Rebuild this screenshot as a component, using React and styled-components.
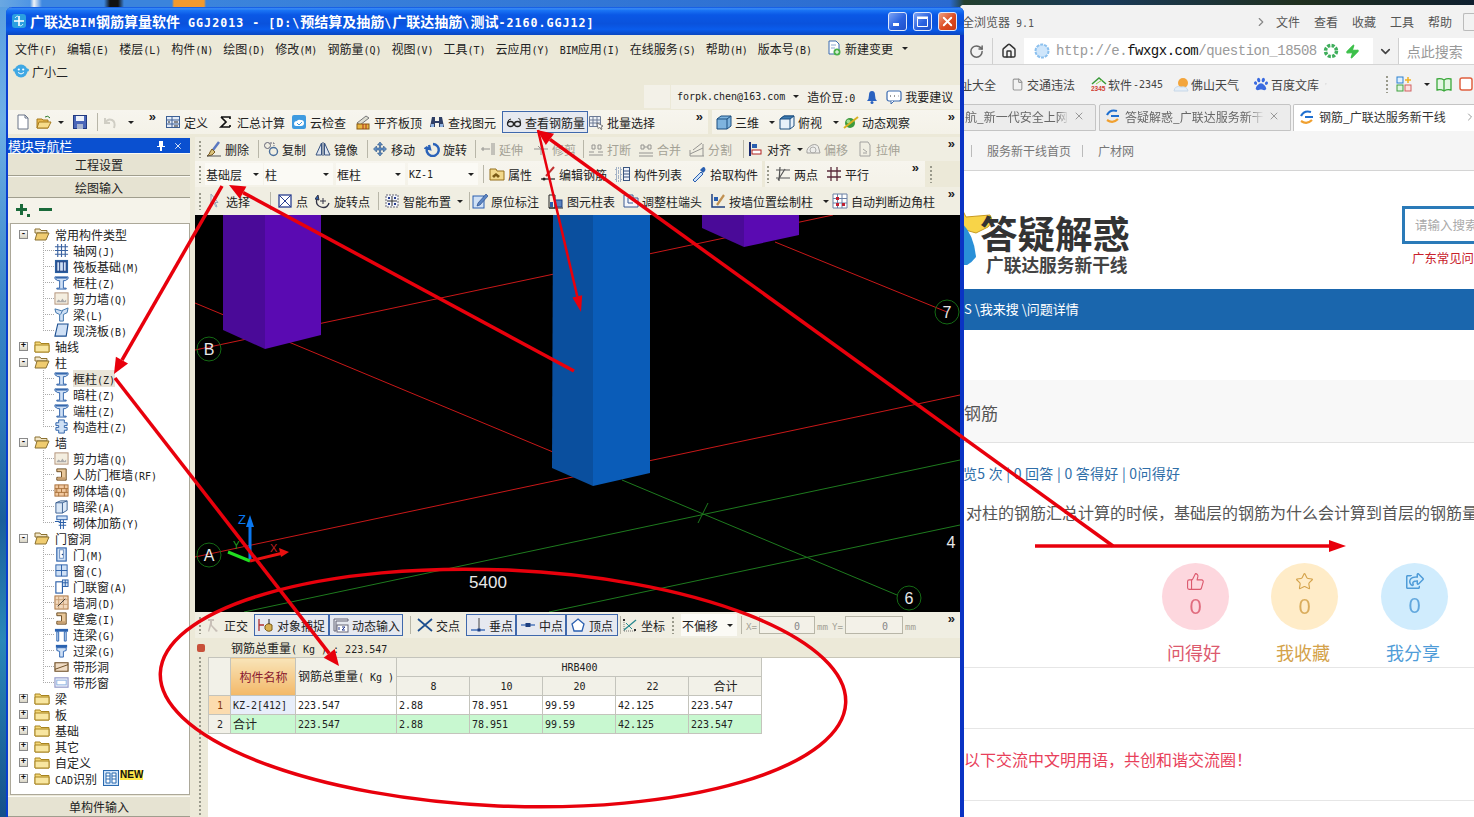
import React from "react";
import styled, { createGlobalStyle } from "styled-components";
import { RotateCw, House, ChevronDown, ChevronRight, ChevronsRight, X, Zap, File, ThumbsUp, Star } from "lucide-react";
import { FaPaw, FaRegShareSquare } from "react-icons/fa";

const Global = createGlobalStyle`
  html, body { margin: 0; padding: 0; background: #2a6fb8; }
  body { font-family: "Noto Sans CJK SC", "Liberation Sans", sans-serif; font-size: 12px; color: #222; }
`;

// latin runs in the old app are half-width, like SimSun
const Half = styled.span`
  font-family: "DejaVu Sans Mono", monospace;
  font-size: 0.8333em;
  white-space: pre;
`;
const Txt = ({ children }) =>
  String(children)
    .split(/([\x20-\x7e]+)/)
    .map((part, i) => (/^[\x20-\x7e]+$/.test(part) ? <Half key={i}>{part}</Half> : part));

const paths = {
  new: <><path d="M3 1h7l3 3v11H3z" fill="#fff" stroke="#6a7488" /><path d="M10 1v3h3" fill="none" stroke="#6a7488" /></>,
  open: <><path d="M1 5h5l1 1h5v8H1z" fill="#e9b94e" stroke="#a67a1c" /><path d="M3 8h12l-3 6H1z" fill="#f7dc8a" stroke="#a67a1c" /><path d="M9 3q3-2 5 1" fill="none" stroke="#2a7a2a" /></>,
  save: <><rect x="1.5" y="1.5" width="13" height="13" fill="#4a66b8" stroke="#223a80" /><rect x="4" y="2" width="8" height="5" fill="#eef2fa" /><rect x="5" y="10" width="6" height="5" fill="#a8b4d0" /></>,
  undo: <path d="M3 4v5h5M3 9q3-5 7-3t2 8" fill="none" stroke="#c4c2b8" strokeWidth="2" />,
  table: <><rect x="1.5" y="2.5" width="13" height="11" fill="#e4ecf8" stroke="#3c5f94" /><path d="M1.5 6h13M1.5 10h13M7 2.5v11" stroke="#3c5f94" /><path d="M3 8h2M9 8h4M9 12h4" stroke="#222" /></>,
  sigma: <path d="M3 3h9v2M12 13H3l5-5-5-5M12 13v-2" fill="none" stroke="#111" strokeWidth="1.7" />,
  cloud: <><rect x="1" y="1" width="14" height="14" rx="2" fill="#3f9be0" /><path d="M3 10q0-3 3-3 1-2 4-1 3 0 3 3t-3 3H5q-2 0-2-2z" fill="#fff" /><path d="M6 9l2 2 3-3" fill="none" stroke="#3f9be0" /></>,
  level: <><path d="M2 9l9-7 3 2-9 7z" fill="#dcdcd0" stroke="#777" /><rect x="2" y="10" width="12" height="5" fill="#e8b640" stroke="#8a5a10" /><path d="M8 10v5M11 10v5" stroke="#a32" /></>,
  bino: <><path d="M3 3h3v4h4V3h3l2 10h-5V9H6v4H1z" fill="#2f3f66" /><rect x="2" y="10" width="3" height="3" fill="#8fb2e0" /><rect x="11" y="10" width="3" height="3" fill="#8fb2e0" /></>,
  glasses: <><ellipse cx="4.5" cy="10" rx="3" ry="2.5" fill="none" stroke="#222" strokeWidth="1.3" /><ellipse cx="11.5" cy="10" rx="3" ry="2.5" fill="none" stroke="#222" strokeWidth="1.3" /><path d="M1.5 9Q2 5 5 5M14.5 9q0-4-2-5M7.5 10h1" fill="none" stroke="#222" /></>,
  batch: <><path d="M1.5 2.5h11v10h-11zM1.5 6h11M1.5 9h11M5 2.5v10M9 2.5v10" fill="#eef1f6" stroke="#6c7a94" /><path d="M9 9l6 3-2 1 1 2-1 .5-1-2-2 1z" fill="#fff" stroke="#555" strokeWidth=".7" /></>,
  cube: <><path d="M1 5l4-3h10v10l-4 3H1z" fill="#7fb4de" stroke="#1d4f80" /><path d="M1 5h10v10M11 5l4-3" fill="none" stroke="#1d4f80" /></>,
  cubeTop: <><path d="M1 5l4-3h10v10l-4 3H1z" fill="#e8f1fa" stroke="#1d4f80" /><path d="M1 5l4-3h10l-4 3z" fill="#3d7ab0" stroke="#1d4f80" /><path d="M11 5v10" stroke="#1d4f80" /></>,
  orbit: <><circle cx="7" cy="9" r="5" fill="#3d9a3d" /><circle cx="5.5" cy="7.5" r="2" fill="#9fdc8f" /><path d="M1 14L15 3" stroke="#d8b020" strokeWidth="2" /></>,
  broom: <><path d="M13 1L7 9" stroke="#5a78c0" strokeWidth="2.5" /><path d="M6 8l3 3-3 3-5 1q3-2 3-4z" fill="#d9c27a" stroke="#7a5a20" /><path d="M1 15h14" stroke="#555" /></>,
  copy: <><circle cx="4.5" cy="4.5" r="3" fill="none" stroke="#667" /><circle cx="10.5" cy="10.5" r="4" fill="none" stroke="#4a6f9c" strokeWidth="1.4" /><path d="M7 2h4v3" fill="none" stroke="#667" strokeDasharray="2 1" /></>,
  mirror: <><path d="M6.5 2v12H1zM9.5 2v12H15z" fill="#dfe6f0" stroke="#3a5580" /><path d="M8 1v14" stroke="#3a5580" /></>,
  move: <path d="M8 1l2.5 3h-2v3h3V5l3 3-3 3V9h-3v3h2L8 15l-2.5-3h2V9h-3v2l-3-3 3-3v2h3V4h-2z" fill="#5f8cc0" stroke="#2d5688" strokeWidth=".6" />,
  rotate: <path d="M4 3l1 4-4-1 1.5-1A6 6 0 1 0 8 2" transform="translate(1 1)" fill="none" stroke="#2a62b8" strokeWidth="2.4" />,
  extend: <path d="M1 8h9M12 2v12M14 2v12M3 6v4" stroke="#777" fill="none" />,
  trim: <path d="M1 8h14M8 2v12M5 5l6 6" stroke="#777" fill="none" />,
  brk: <path d="M1 11h5M10 11h5M1 14h14M4 4h3v4H4zM10 4h3v4h-3z" stroke="#777" fill="none" />,
  merge: <path d="M1 12h14M1 15h14M3 4h3v4H3zM10 4h3v4h-3zM6 6h4" stroke="#777" fill="none" />,
  split: <path d="M1 13L14 7M1 15h14M1 9v6M14 3v12M4 9l9-7" stroke="#777" fill="none" />,
  align: <><path d="M2 1v14" stroke="#1a2a70" strokeWidth="2" /><rect x="4" y="3" width="5" height="4" fill="#2a5fb0" /><rect x="4" y="9" width="9" height="4" fill="#fff" stroke="#b02020" /></>,
  offset: <><path d="M2 12q-1-5 5-8 6-2 7 4l1 4z" fill="#eee" stroke="#888" /><circle cx="8" cy="9" r="3" fill="none" stroke="#999" /></>,
  stretch: <path d="M3 1h8l2 3v11H3zM6 8l4 3M6 12h4" fill="none" stroke="#888" />,
  attr: <><path d="M1 3h6l1 2h7v9H1z" fill="#f2d88a" stroke="#96701c" /><path d="M3 10l4-3 4 3-2 2-2-2-2 2z" fill="#7a5a14" /></>,
  editbar: <><path d="M14 1L6 10" stroke="#c03030" strokeWidth="2" /><path d="M1 13h14" stroke="#222" strokeWidth="1.2" /><circle cx="4" cy="13" r="1.5" fill="#222" /></>,
  list: <><path d="M1 2h5v3H1zM1 7h5v3H1zM1 12h5v3H1z" fill="none" stroke="#5070a0" strokeDasharray="1 1" /><rect x="8.5" y="1.5" width="6" height="13" fill="#eef2fa" stroke="#3a5580" /><path d="M8.5 5h6M8.5 8h6M8.5 11h6" stroke="#3a5580" /></>,
  dropper: <><path d="M2 14l8-8 2 2-8 8z" fill="#cfe3f8" stroke="#2a5fb0" /><path d="M9 4l2-2q2-2 3 0t0 3l-2 2z" fill="#2a5fb0" /></>,
  twopts: <path d="M1 4h14M1 12h14M5 1l-1 14M10 3L3 14" fill="none" stroke="#555" strokeWidth="1.2" />,
  parallel: <path d="M1 5h14M1 11h14M5 1v14M11 1v14" stroke="#5a2a3a" strokeWidth="1.3" />,
  cursor: <path d="M4 1v11l3-2 2 4 1-.5-2-4h3z" fill="#eee" stroke="#9ab" />,
  pointx: <><rect x="2" y="2" width="12" height="12" fill="#fff" stroke="#2a3f90" strokeWidth="1.3" /><path d="M2 2l12 12M14 2L2 14" stroke="#2a3f90" /></>,
  rotpt: <><path d="M2 6q-2 6 4 8t8-4" fill="none" stroke="#334" strokeWidth="1.3" /><path d="M3 2l1 5-4-1zM8 5v6M5 8h6" fill="#2a5fb0" stroke="#334" /></>,
  smart: <><rect x="2" y="2" width="12" height="12" fill="#f4f6fa" stroke="#667" strokeDasharray="2 1" /><path d="M8 3v10M3 8h10" stroke="#333" /><path d="M4 4h2v2H4zM10 10h2v2h-2zM10 4h2v2h-2zM4 10h2v2H4z" fill="#2a3f90" /></>,
  mark: <><rect x="1" y="3" width="11" height="12" fill="#cfe0f5" stroke="#2a5fb0" /><path d="M14 1L6 10l-1 3 3-1 8-9z" fill="#5c86c4" stroke="#1d3f80" strokeWidth=".6" /></>,
  coltab: <><path d="M1 2h6v13H1zM1 15h14" fill="none" stroke="#222" /><rect x="7" y="7" width="7" height="7" fill="#5a83c0" stroke="#1d3f80" /><rect x="2" y="9" width="3" height="5" fill="#2a5fb0" /></>,
  adjust: <><path d="M1 2h9v3h5v9H1z" fill="#f4f6fa" stroke="#3a5a94" /><path d="M5 5v5h5" fill="none" stroke="#3a5a94" /></>,
  wallpos: <><path d="M2 1v13h13" fill="none" stroke="#1d3f80" strokeWidth="1.5" /><rect x="4" y="4" width="4" height="4" fill="#2a5fb0" /><path d="M14 2L7 12" stroke="#c09050" strokeWidth="2.2" /></>,
  corner: <><path d="M1 1h14v14H1zM1 5.5h14M1 10h14M5.5 1v14M10 1v14" fill="#fff" stroke="#6a80a4" /><path d="M4 4h3v3H4zM4 10h3v3H4zM10 10h3v3h-3z" fill="#c02030" /></>,
  ortho: <path d="M3 2h6v2H7v4l6 6-2 1-5-6-2 6-1-1 2-8V4H3z" fill="#c8c0b8" />,
  snap: <><path d="M1 2v12M1 8h5" stroke="#b03030" strokeWidth="1.3" /><path d="M7 9q3-4 7-1v5q-4 3-7-1z" fill="#d8b050" stroke="#7a5a14" /><path d="M11 2v5" stroke="#222" /></>,
  dyn: <><path d="M1 2h14v2H3v10H1z" fill="none" stroke="#667" /><rect x="4" y="8" width="11" height="7" fill="#fff" stroke="#667" /><path d="M6 10v3M9 10h3l-3 3h3" stroke="#2a3f90" fill="none" /></>,
  cross: <path d="M1 2l14 12M15 2L1 14" stroke="#1d4f90" strokeWidth="1.7" />,
  perp: <><path d="M1 13h14" stroke="#2a5fb0" strokeWidth="1.3" /><path d="M9 1v12" stroke="#444" /><rect x="7.5" y="11.5" width="3" height="3" fill="#1d3f80" /></>,
  mid: <><path d="M1 8h14" stroke="#2a5fb0" strokeWidth="1.2" /><rect x="5.5" y="6" width="5" height="4" fill="#1d3f80" /></>,
  vertex: <path d="M8 2l6 5-2 7H4L2 7z" fill="#fff" stroke="#2a5fb0" strokeWidth="1.3" />,
  coords: <><path d="M2 14V4M2 14h12" stroke="#777" strokeDasharray="1 1" /><path d="M2 13L14 3" stroke="#2a8a90" strokeWidth="1.3" /><path d="M4 6l6 6" stroke="#2a8a90" /><rect x="1" y="2" width="2" height="2" fill="#333" /><rect x="12" y="12" width="2" height="2" fill="#333" /></>,
  grid: <path d="M1 4h14M1 8h14M1 12h14M4 1v14M8 1v14M12 1v14" stroke="#3a62a0" strokeWidth="1.2" />,
  raft: <><rect x="1" y="1" width="14" height="14" fill="#2a5fa0" /><rect x="3" y="3" width="10" height="10" fill="#cfe0f5" stroke="#1d3f80" /><path d="M6 3v10M10 3v10" stroke="#1d3f80" /></>,
  col: <><path d="M1 2h14v2l-3 2h-2v8h3v1H3v-1h3V6H4L1 4z" fill="#cfe0f5" stroke="#2a5fa8" /><path d="M2 3h12" stroke="#2a5fa8" strokeWidth="1.5" /></>,
  shear: <><rect x="1" y="2" width="14" height="12" fill="#f4eee0" stroke="#b09078" /><path d="M3 11l2-2 2 2 2-3 2 3 2-2v3H3z" fill="#aaa" /></>,
  beam: <><path d="M1 2l7 2 7-3-1 5-4 2v7H6V8L2 6z" fill="#cfe0f5" stroke="#3a70a8" /><path d="M9 4l-2 4" stroke="#3a70a8" /></>,
  slab: <path d="M4 1h11l-2 13H1z" fill="#cfe0f5" stroke="#1d4f90" strokeWidth="1.2" />,
  conscol: <path d="M5 1h6v3h3v3h-3v2h3v3h-3v3H5v-3H2V9h3V7H2V4h3z" fill="#cfe0f5" stroke="#2a5fa8" />,
  fdoor: <><path d="M3 2h10v12H3v-3h5V5H3z" fill="#e8c79a" stroke="#6a4a20" /><rect x="4" y="11" width="8" height="2" fill="#c8a070" /></>,
  brick: <><rect x="1" y="2" width="14" height="12" fill="#f2c9a0" stroke="#a8703a" /><path d="M1 6h14M1 10h14M5 2v4M11 2v4M8 6v4M3 6v4M13 6v4M5 10v4M11 10v4" stroke="#a8703a" /></>,
  dbeam: <><path d="M2 4l5-2h7v10l-5 3H2z" fill="#dbe8f7" stroke="#3a5f90" /><path d="M2 4h7v11M9 4l5-2" fill="none" stroke="#3a5f90" /></>,
  rebar: <><rect x="3" y="1" width="11" height="4" fill="#cfe0f5" stroke="#2a5fa8" /><path d="M7 5v10M10 5v10M5 8h8M5 11h8M1 7h5" stroke="#2a5fa8" strokeWidth="1.1" /></>,
  door: <><rect x="3" y="1" width="10" height="14" fill="#cfe0f5" stroke="#2a5fa8" strokeWidth="1.2" /><rect x="6" y="3" width="4" height="9" fill="#fff" stroke="#6a8ec0" /><circle cx="9" cy="8" r=".8" fill="#1d3f80" /></>,
  win: <><rect x="2" y="2" width="12" height="12" fill="#cfe0f5" stroke="#2a5fa8" /><path d="M8 2v12M2 8h12" stroke="#2a5fa8" /></>,
  doorwin: <><rect x="2" y="3" width="7" height="12" fill="#fff" stroke="#2a5fa8" strokeWidth="1.2" /><rect x="9" y="1" width="6" height="7" fill="#cfe0f5" stroke="#2a5fa8" /><path d="M12 1v7M9 4h6" stroke="#2a5fa8" /></>,
  hole: <><rect x="1" y="1" width="14" height="14" fill="#f2d8bc" stroke="#a8703a" /><path d="M1 5h14M1 10h14M5 1v14M10 1v14" stroke="#c8a078" /><path d="M4 12L12 4" stroke="#333" /></>,
  link: <><path d="M1 2h14v3H1z" fill="#2a62b0" /><path d="M3 5v10h2V5zM11 5v10h2V5z" fill="#cfe0f5" stroke="#2a62b0" /></>,
  lintel: <><rect x="2" y="2" width="12" height="3" fill="#2a62b0" /><path d="M3 5h10v3l-3 1v6H6V9L3 8z" fill="#cfe0f5" stroke="#2a62b0" /></>,
  bandhole: <><path d="M1 4h14v9H1z" fill="#f0dcc4" stroke="#6a4a20" strokeWidth="1.2" /><path d="M1 11L15 6" stroke="#6a4a20" /></>,
  bandwin: <><rect x="1" y="3" width="14" height="10" fill="#eef0fa" stroke="#9098c8" strokeWidth="1.2" /><rect x="3" y="5.5" width="10" height="5" fill="#fff" stroke="#8ab0e0" /></>,
  cadgrid: <><rect x=".5" y=".5" width="15" height="15" fill="#cfe3f8" stroke="#2a6ab0" /><path d="M3 3h4v10H3zM9 3h4v10H9zM3 6h4M3 9h4M9 6h4M9 9h4" fill="#fff" stroke="#2a6ab0" /></>,
  folder: <><path d="M1 4h5l1 1.5h8V14H1z" fill="#f4d878" stroke="#a88420" /><path d="M1 7h14v7H1z" fill="#f8e6a0" stroke="#a88420" /></>,
  folderOpen: <><path d="M1 3h5l1 1.5h6V7H1z" fill="#f2e6c8" stroke="#8a7030" /><path d="M3 7h12l-3 7H1z" fill="#f0cc70" stroke="#8a7030" /></>,
  docNew: <><path d="M3 1h7l3 3v10H3z" fill="#fff" stroke="#3a6ab0" /><circle cx="11" cy="12" r="3.5" fill="#4ab04a" /><path d="M11 10v4M9 12h4" stroke="#fff" /><path d="M5 5h5M5 8h4" stroke="#8aa8d0" /></>,
  bell: <><path d="M3 12q2-2 2-6t3-4 3 4 2 6z" fill="#2a62c0" /><circle cx="8" cy="13.5" r="1.5" fill="#2a62c0" /></>,
  chat: <><rect x="1" y="2" width="14" height="10" rx="2" fill="#fff" stroke="#3a6ab0" strokeWidth="1.2" /><path d="M5 12v3l3-3" fill="#fff" stroke="#3a6ab0" /><path d="M4 7h1M8 7h1M12 7h.5" stroke="#333" /></>,
  face: <><circle cx="8" cy="8" r="6.5" fill="#3fa8e4" /><circle cx="1.5" cy="7" r="1.5" fill="#3fa8e4" /><circle cx="14.5" cy="7" r="1.5" fill="#3fa8e4" /><circle cx="5.8" cy="6.5" r="1.1" fill="#fff" /><circle cx="10.2" cy="6.5" r="1.1" fill="#fff" /><path d="M5 9.5q3 3 6 0" fill="none" stroke="#fff" /></>,
  appMark: <><rect x="1" y="1" width="14" height="14" rx="3" fill="#2b9fe0" /><path d="M8 3v10M3 8h10" stroke="#fff" strokeWidth="1.6" /><path d="M4 5q1 -2 3-2M12 11q-1 2-3 2" stroke="#cfefff" fill="none" /></>,
  logoTab: <><path d="M2 7q3-6 10-4" fill="none" stroke="#1f6fd0" strokeWidth="2.2" /><path d="M2 12q6 4 11-1" fill="none" stroke="#f0a030" strokeWidth="2.2" /><path d="M6 8h8" stroke="#1f6fd0" strokeWidth="2" /></>,
  globe: <circle cx="8" cy="8" r="6.5" fill="#cfe6fb" stroke="#8cc0ee" strokeWidth="2" strokeDasharray="3 1" />,
  leaf: <circle cx="8" cy="8" r="5.5" fill="none" stroke="#3fae5c" strokeWidth="3.5" strokeDasharray="3 1.3" />,
  house2345: <><path d="M1 8l7-6 7 6" fill="none" stroke="#3a9a3a" strokeWidth="1.5" /><path d="M5 8l6-4" stroke="#8ad04a" /><text x="0" y="15" fontSize="6.5" fontWeight="700" fill="#d04030" fontFamily="Liberation Sans">2345</text></>,
  sun: <><circle cx="10" cy="7" r="5" fill="#f3a53c" /><path d="M1 15q1-6 7-4 6-1 7 4z" fill="#e4eef8" stroke="#c8d8e8" /></>,
  gridApps: <><rect x="1" y="1" width="6" height="6" fill="#dff0ff" stroke="#2a80d0" /><rect x="9" y="9" width="6" height="6" fill="#fde0e0" stroke="#d06060" /><rect x="1" y="9" width="6" height="6" fill="#dff5df" stroke="#40a040" /><path d="M12 1v6M9 4h6" stroke="#f0b020" strokeWidth="1.5" /></>,
  book: <path d="M1 3q4-1 7 1 3-2 7-1v11q-4-1-7 1-3-2-7-1zM8 4v11" fill="#e4f6e4" stroke="#3aa83a" strokeWidth="1.3" />,
  redbox: <rect x="2" y="2" width="12" height="12" rx="2" fill="#fff" stroke="#e06040" strokeWidth="1.5" />,
};

const IconSvg = styled.svg`
  flex: 0 0 auto;
  display: block;
`;
const Icon = ({ name, size = 16 }) => (
  <IconSvg viewBox="0 0 16 16" width={size} height={size}>{paths[name]}</IconSvg>
);

const Desktop = styled.div`
  position: relative;
  width: 1474px;
  height: 817px;
  overflow: hidden;
  background:
    linear-gradient(to right, #6aa8e2 0, #4f95e4 30px, #f2f4f6 34px, #3f88e0 42px, #3f88e0 104px, #111 110px, #111 118px, #3b84dc 124px, #3b84dc 172px, #f29a2e 174px, #f29a2e 204px, #3b84dc 206px, #2a6ad0 950px, #23402f 964px, #1a3a5a 1100px, #20301f 1300px, #0f2030 1474px) top / 100% 7px no-repeat,
    linear-gradient(to bottom, #5a9fe0, #6fb0e6 120px, #3a86c8 300px, #2a78b8 420px, #1a5f9a 520px, #2a88b8 640px, #15508a 817px);
`;

// --- app window

const AppWindow = styled.div`
  position: absolute;
  left: 6px;
  top: 7px;
  width: 952px;
  height: 810px;
  z-index: 2;
  display: flex;
  flex-direction: column;
  border-left: 2px solid #0a3ed0;
  border-right: 4px solid #0a33c4;
  border-radius: 6px 6px 0 0;
  background: #ece9d8;
`;
const TitleBar = styled.div`
  height: 28px;
  flex: none;
  display: flex;
  align-items: center;
  gap: 3px;
  margin: 0 -4px 0 -2px;
  padding: 0 7px 0 5px;
  color: #fff;
  font-size: 14px;
  font-weight: 700;
  border-radius: 6px 6px 0 0;
  background: linear-gradient(#0a4fe0, #3a8cf6 6%, #1a74f4 12%, #0a58e6 28%, #0a52dc 60%, #0a5cec 80%, #0a46c0);
  white-space: pre;
`;
const TitleText = styled.span`
  flex: 1;
  ${Half} { letter-spacing: 1px; }
`;
const WinBtn = styled.span`
  width: 19px;
  height: 19px;
  box-sizing: border-box;
  display: flex;
  align-items: center;
  justify-content: center;
  border: 1px solid #dfe8fb;
  border-radius: 3px;
  margin-left: 3px;
  background: ${(p) => (p.$close ? "linear-gradient(135deg,#f0a080,#dc4a20 55%,#c83a18)" : "linear-gradient(135deg,#7ea4f4,#2a62e0 55%,#2050c8)")};
`;
const MenuBar = styled.div`
  height: 26px;
  display: flex;
  align-items: center;
  gap: 10px;
  padding: 0 0 0 7px;
  white-space: nowrap;
`;
const MenuExtra = styled.span`
  display: inline-flex;
  align-items: center;
  gap: 3px;
  margin-left: 4px;
`;
const Caret = styled.i`
  flex: none;
  width: 0;
  height: 0;
  margin-left: ${(p) => p.$m ?? 6}px;
  border-left: 3px solid transparent;
  border-right: 3px solid transparent;
  border-top: 3px solid #222;
`;
const SmallRow = styled.div`
  height: 20px;
  display: flex;
  align-items: center;
  gap: 3px;
  padding-left: 5px;
`;
const AccountRow = styled.div`
  height: 29px;
  box-sizing: border-box;
  padding-top: 2px;
  display: flex;
  align-items: center;
  justify-content: flex-end;
  gap: 1px;
`;
const Patch = styled.div`
  width: 26px;
  height: 23px;
  background: #f3f1e8;
`;
const AccountBand = styled.div`
  width: 289px;
  height: 24px;
  box-sizing: border-box;
  display: flex;
  align-items: center;
  padding-left: 6px;
  background: #f3f1e8;
  white-space: nowrap;
`;
const AccountText = styled.span`
  margin-left: ${(p) => p.$m || 0}px;
`;
const Strip = styled.div`
  flex: none;
  height: ${(p) => p.$h}px;
  margin-bottom: ${(p) => p.$mb || 0}px;
  display: flex;
  align-items: center;
  white-space: nowrap;
  background: ${(p) => p.$bg || "#ece9d8"};
`;
const Band = styled.div`
  display: flex;
  align-items: center;
  height: 100%;
  box-sizing: border-box;
  flex: ${(p) => (p.$w ? `0 0 ${p.$w}px` : "1")};
  margin-left: ${(p) => p.$ml || 0}px;
  padding-left: ${(p) => p.$pl || 0}px;
  background: linear-gradient(#f7f5ee, #f4f2e8);
`;
const Grip = styled.span`
  flex: 0 0 ${(p) => p.$w}px;
  height: 17px;
  background: repeating-linear-gradient(#9a9a8c 0 2px, transparent 2px 4px) ${(p) => p.$x ?? 4}px 0 / 2px 100% no-repeat;
`;
const More = styled.span`
  font: 700 13px "Liberation Sans", sans-serif;
  margin-left: auto;
  margin-right: ${(p) => p.$r ?? 5}px;
  align-self: flex-start;
  line-height: 14px;
`;
const SepLine = styled.span`
  flex: 0 0 ${(p) => p.$w}px;
  height: 18px;
  background: linear-gradient(#b8b6a8, #b8b6a8) center / 1px 100% no-repeat;
`;
const ToolBtn = styled.span`
  flex: 0 0 ${(p) => p.$w}px;
  box-sizing: border-box;
  display: inline-flex;
  align-items: center;
  gap: 3px;
  height: 22px;
  color: ${(p) => (p.$off ? "#a4a296" : "#222")};
  ${(p) => p.$active && `
    padding-left: 3px;
    border: 1px solid #3f68ac;
    background: #e6e9f0;
  `}
  svg { opacity: ${(p) => (p.$off ? 0.75 : 1)}; }
`;
const Tools = ({ items }) =>
  items.map((item, i) =>
    item.sep ? (
      <SepLine key={i} $w={item.sep} />
    ) : (
      <ToolBtn key={i} $w={item.w} $active={item.active} $off={item.off}>
        <Icon name={item.icon} />
        {item.label && <span><Txt>{item.label}</Txt></span>}
        {item.caret !== undefined && <Caret $m={item.caret} />}
      </ToolBtn>
    )
  );
const t = (icon, label, w, extra) => ({ icon, label, w, ...extra });

const Main = styled.div`
  flex: 1;
  min-height: 0;
  display: flex;
  gap: 5px;
`;
const Sidebar = styled.div`
  flex: 0 0 182px;
  display: flex;
  flex-direction: column;
`;
const SideHead = styled.div`
  height: 15px;
  margin-top: 1px;
  display: flex;
  align-items: center;
  color: #fff;
  background: #0a50d0;
  font-size: 13px;
  letter-spacing: -0.2px;
  line-height: 15px;
`;
const SideTitle = styled.span`
  flex: 1;
`;
const SideHeadIcon = styled.span`
  display: flex;
  margin-right: 7px;
`;
const SideBtn = styled.div`
  flex: none;
  height: ${(p) => p.$h || 22}px;
  box-sizing: border-box;
  display: flex;
  align-items: center;
  justify-content: center;
  border-top: 1px solid #fbfaf4;
  border-bottom: 1px solid #a09e8e;
  background: #e6e3d2;
`;
const TreeTools = styled.div`
  height: 25px;
  flex: none;
  display: flex;
  align-items: center;
  gap: 8px;
  padding-left: 7px;
  background: #f5f3ea;
`;
const TreeBox = styled.div`
  flex: 1;
  margin: 0 0 1px 2px;
  padding-top: 2px;
  background: #fff;
  border: 1px solid #aca899;
  overflow: hidden;
`;
const TreeRow = styled.div`
  height: 16px;
  display: flex;
  align-items: center;
  padding-left: ${(p) => (p.$child ? 32 : 8)}px;
  white-space: nowrap;
`;
const Expander = styled.span`
  flex: 0 0 9px;
  height: 9px;
  box-sizing: border-box;
  border: 1px solid #8a8a8a;
  background: linear-gradient(#fff, #d8d4c4);
  margin-right: 6px;
  display: flex;
  align-items: center;
  justify-content: center;
  color: #111;
  font: 700 9px/7px "Liberation Mono", monospace;
`;
const Branch = styled.span`
  flex: 0 0 11px;
  height: 16px;
  background:
    repeating-linear-gradient(#aaa 0 1px, transparent 1px 2px) 0 0 / 1px ${(p) => (p.$last ? "8px" : "100%")} no-repeat,
    repeating-linear-gradient(to right, #aaa 0 1px, transparent 1px 2px) 0 8px / 100% 1px no-repeat;
`;
const TreeLabel = styled.span`
  margin-left: ${(p) => (p.$child ? 4 : 5)}px;
  background: ${(p) => (p.$sel ? "#e9e4d8" : "transparent")};
`;
const NewTag = styled.span`
  font: 700 10px/10px "Liberation Sans", sans-serif;
  color: #111;
  background: #ffe84a;
  align-self: flex-start;
  margin-left: 1px;
`;
const GridIcon = styled.span`
  margin-left: 6px;
`;

const tree = [
  { label: "常用构件类型", open: true, kids: [["grid", "轴网(J)"], ["raft", "筏板基础(M)"], ["col", "框柱(Z)"], ["shear", "剪力墙(Q)"], ["beam", "梁(L)"], ["slab", "现浇板(B)"]] },
  { label: "轴线" },
  { label: "柱", open: true, kids: [["col", "框柱(Z)", true], ["col", "暗柱(Z)"], ["col", "端柱(Z)"], ["conscol", "构造柱(Z)"]] },
  { label: "墙", open: true, kids: [["shear", "剪力墙(Q)"], ["fdoor", "人防门框墙(RF)"], ["brick", "砌体墙(Q)"], ["dbeam", "暗梁(A)"], ["rebar", "砌体加筋(Y)"]] },
  { label: "门窗洞", open: true, kids: [["door", "门(M)"], ["win", "窗(C)"], ["doorwin", "门联窗(A)"], ["hole", "墙洞(D)"], ["fdoor", "壁龛(I)"], ["link", "连梁(G)"], ["lintel", "过梁(G)"], ["bandhole", "带形洞"], ["bandwin", "带形窗"]] },
  { label: "梁" },
  { label: "板" },
  { label: "基础" },
  { label: "其它" },
  { label: "自定义" },
  { label: "CAD识别", cad: true },
];

const Workspace = styled.div`
  flex: 1;
  min-width: 0;
  display: flex;
  flex-direction: column;
`;
const SelectBox = styled.span`
  flex: 0 0 ${(p) => p.$w}px;
  box-sizing: border-box;
  height: 22px;
  margin-right: ${(p) => p.$mr ?? 3}px;
  display: inline-flex;
  align-items: center;
  justify-content: space-between;
  padding: 0 4px 0 1px;
  background: #fbfaf5;
`;
const Viewport = styled.svg`
  display: block;
  flex: none;
  background: #000;
`;
const FieldLabel = styled.span`
  color: #a4a296;
  margin: 0 2px;
  font-size: 11px;
`;
const NumInput = styled.span`
  flex: 0 0 ${(p) => p.$w}px;
  box-sizing: border-box;
  height: 18px;
  border: 1px solid #b8b6a8;
  background: #f3f1e8;
  color: #888;
  text-align: right;
  padding-right: 14px;
  line-height: 16px;
`;
const StatusLine = styled.div`
  flex: none;
  height: 19px;
  display: flex;
  align-items: center;
  padding-left: 2px;
  gap: 26px;
  background: #ece9d8;
`;
const CloseDot = styled.span`
  flex: none;
  width: 8px;
  height: 8px;
  border-radius: 2px;
  background: #c8503a;
`;
const TableArea = styled.div`
  flex: 1;
  min-height: 0;
  display: flex;
`;
const TableGutter = styled.div`
  flex: 0 0 13px;
  background: repeating-linear-gradient(#9a9a8c 0 2px, transparent 2px 4px) 4px 0 / 2px 100% no-repeat #ece9d8;
`;
const TablePane = styled.div`
  flex: 1;
  background: #fff;
  border-top: 1px solid #c8c6b8;
  box-sizing: border-box;
`;
const Sheet = styled.table`
  border-collapse: collapse;
  table-layout: fixed;
  width: 553px;
  margin-top: -1px;
`;
const Cell = styled.td`
  box-sizing: border-box;
  height: 19px;
  padding: 0 1px 0 2px;
  border: 1px solid #c4c4bc;
  white-space: nowrap;
  line-height: 16px;
  overflow: hidden;
  text-align: ${(p) => (p.$center ? "center" : "left")};
  color: ${(p) => p.$color || "#222"};
  background: ${(p) => p.$bg || "#fff"};
`;

// --- browser window behind it

const Browser = styled.div`
  position: absolute;
  left: 960px;
  top: 5px;
  width: 514px;
  height: 812px;
  z-index: 1;
  overflow: hidden;
  background: #fff;
  border-radius: 4px 0 0 0;
`;
const BRow = styled.div`
  height: ${(p) => p.$h}px;
  flex: none;
  display: flex;
  align-items: center;
  box-sizing: border-box;
  white-space: nowrap;
  color: ${(p) => p.$color || "#444"};
  background: ${(p) => p.$bg || "#f2f2f2"};
  ${(p) => p.$line && "border-bottom: 1px solid #d4d4d4;"}
`;
const BTitle = styled.span`
  margin-left: 2px;
  color: #555;
`;
const BMenu = styled.span`
  margin-left: ${(p) => p.$m ?? 14}px;
  color: #555;
`;
const RightGroup = styled.div`
  margin-left: auto;
  display: flex;
  align-items: center;
`;
const EdgeBox = styled.span`
  width: 10px;
  height: 16px;
  margin-left: 11px;
  border: 1px solid #bbb;
  border-right: 0;
  border-radius: 2px 0 0 2px;
`;
const NavSlot = styled.span`
  flex: 0 0 ${(p) => p.$w}px;
  height: 100%;
  display: flex;
  align-items: center;
  justify-content: center;
  box-sizing: border-box;
  color: #666;
  background: ${(p) => p.$bg || "transparent"};
  ${(p) => p.$edge && "border-right: 1px solid #d0d0d0;"}
`;
const UrlField = styled.div`
  flex: 0 0 341px;
  height: 100%;
  display: flex;
  align-items: center;
  background: #fff;
  padding-left: 10px;
  box-sizing: border-box;
  gap: 6px;
  font: 14px "Liberation Mono", monospace;
  letter-spacing: -0.5px;
  color: #9a9a9a;
`;
const UrlDark = styled.span`
  color: #111;
`;
const UrlTail = styled.span`
  flex: 1;
  white-space: pre;
`;
const SearchField = styled.div`
  flex: 1;
  height: 100%;
  background: #fff;
  border-left: 1px solid #d0d0d0;
  display: flex;
  align-items: center;
  padding-left: 8px;
  color: #999;
  font-size: 14px;
`;
const Mark = styled.span`
  flex: 0 0 ${(p) => p.$w}px;
  display: inline-flex;
  align-items: center;
  gap: ${(p) => p.$gap ?? 2}px;
  margin-left: ${(p) => p.$m || 0}px;
  color: #444;
`;
const Tab = styled.div`
  flex: 0 0 ${(p) => p.$w}px;
  height: 27px;
  box-sizing: border-box;
  margin-right: ${(p) => p.$mr || 0}px;
  display: flex;
  align-items: center;
  gap: 4px;
  padding: 0 0 2px ${(p) => p.$pl ?? 5}px;
  border: 1px solid #c4c4c4;
  border-bottom: ${(p) => (p.$on ? "0" : "1px solid #c4c4c4")};
  border-radius: 2px 2px 0 0;
  background: ${(p) => (p.$on ? "#fff" : "#ececec")};
  color: ${(p) => (p.$on ? "#333" : "#666")};
  overflow: hidden;
`;
const TabLabel = styled.span`
  flex: 1;
  overflow: hidden;
  -webkit-mask-image: ${(p) => (p.$fade ? "linear-gradient(to right, #000 88%, transparent)" : "none")};
`;
const TabClose = styled.span`
  flex: none;
  display: flex;
  margin-right: ${(p) => p.$r ?? 10}px;
  color: #999;
`;
const Divider = styled.span`
  width: 1px;
  height: 12px;
  background: #bbb;
  margin: 0 15px 0 11px;
`;
const NavLink = styled.span`
  color: #777;
`;
const LogoArea = styled.div`
  height: 118px;
  display: flex;
  position: relative;
  background: #fff;
`;
const LogoBlock = styled.div`
  margin: 39px 0 0 20px;
  position: relative;
  z-index: 1;
`;
const LogoMain = styled.div`
  font-size: 37.5px;
  font-weight: 700;
  line-height: 44px;
  color: #333;
`;
const LogoSub = styled.div`
  font-size: 17.7px;
  font-weight: 700;
  line-height: 20px;
  margin: 0 0 0 6px;
  color: #444;
`;
const Bird = styled.svg`
  position: absolute;
  left: 2px;
  top: 22px;
`;
const SearchCol = styled.div`
  margin: 35px 0 0 auto;
  width: 72px;
  white-space: nowrap;
`;
const SearchBox = styled.div`
  height: 38px;
  box-sizing: border-box;
  border: 3px solid #2a7ab8;
  border-right: 0;
  color: #aaa;
  font-size: 12.5px;
  line-height: 32px;
  padding-left: 10px;
  overflow: hidden;
`;
const SearchHint = styled.div`
  color: #c8202a;
  margin: 5px 0 0 10px;
  overflow: hidden;
  font-size: 12.4px;
`;
const Crumb = styled.div`
  height: 41px;
  background: #1a66ad;
  color: #fff;
  font-size: 13px;
  line-height: 39px;
  padding-left: 4px;
  white-space: pre;
`;
const Gap = styled.div`
  height: ${(p) => p.$h}px;
`;
const QHead = styled.div`
  height: 63px;
  box-sizing: border-box;
  background: #f8f8f8;
  border-bottom: 1px solid #e2e2e2;
  font-size: 17px;
  line-height: 66px;
  padding-left: 4px;
  color: #555;
`;
const Stats = styled.div`
  margin-top: 18px;
  height: 24px;
  padding-left: 3px;
  font-size: 14px;
  letter-spacing: 0.25px;
  line-height: 24px;
  color: #2f6ea8;
  white-space: pre;
`;
const QBody = styled.div`
  margin-top: 15px;
  height: 24px;
  padding-left: 6px;
  font-size: 16px;
  line-height: 24px;
  color: #555;
  white-space: nowrap;
`;
const Actions = styled.div`
  margin: 39px 0 0 180px;
  display: flex;
  height: 104px;
`;
const Action = styled.div`
  flex: 0 0 ${(p) => p.$w}px;
  display: flex;
  flex-direction: column;
  align-items: flex-start;
  color: ${(p) => p.$color};
`;
const Disc = styled.div`
  width: 67px;
  height: 67px;
  margin-left: 22px;
  border-radius: 50%;
  background: ${(p) => p.$bg};
  display: flex;
  flex-direction: column;
  align-items: center;
  padding-top: 9px;
  box-sizing: border-box;
`;
const DiscNum = styled.span`
  font: 22px/26px "Liberation Sans", sans-serif;
  margin-top: 3px;
  opacity: 0.85;
`;
const ActionLabel = styled.span`
  font-size: 18px;
  line-height: 26px;
  margin: 9px 0 0 27px;
`;
const Rule = styled.div`
  height: 1px;
  background: #e6e6e6;
`;
const Notice = styled.div`
  height: 72px;
  box-sizing: border-box;
  border-bottom: 1px solid #e6e6e6;
  padding: 18px 0 0 4px;
  font-size: 16px;
  line-height: 24px;
  color: #e8405a;
  white-space: nowrap;
`;

// --- red marks drawn over both windows

const Marks = styled.svg`
  position: absolute;
  left: 0;
  top: 0;
  z-index: 5;
  pointer-events: none;
`;
const RED = "#e8000c";
const Arrow = ({ from, to, w = 3.5, head = 16, half = 7 }) => {
  const [x1, y1] = from;
  const [x2, y2] = to;
  const len = Math.hypot(x2 - x1, y2 - y1);
  const ux = (x2 - x1) / len;
  const uy = (y2 - y1) / len;
  const bx = x2 - ux * head;
  const by = y2 - uy * head;
  const pts = `${x2},${y2} ${bx - uy * half},${by + ux * half} ${bx + uy * half},${by - ux * half}`;
  return (
    <>
      <line x1={x1} y1={y1} x2={bx} y2={by} stroke={RED} strokeWidth={w} />
      <polygon points={pts} fill={RED} />
    </>
  );
};

const row0Left = [t("new", "", 21), t("open", "", 36, { caret: 3 }), t("save", "", 20), { sep: 10 }, t("undo", "", 30, { caret: 7, off: true })];
const row0Mid = [
  t("table", "定义", 53), t("sigma", "汇总计算", 73), t("cloud", "云检查", 64), t("level", "平齐板顶", 74), t("bino", "查找图元", 73),
  t("glasses", "查看钢筋量", 86, { active: true }),
];
const row1 = [
  t("broom", "删除", 48), { sep: 9 }, t("copy", "复制", 52), t("mirror", "镜像", 48), { sep: 9 }, t("move", "移动", 52), t("rotate", "旋转", 47), { sep: 9 },
  t("extend", "延伸", 53, { off: true }), t("trim", "修剪", 46, { off: true }), { sep: 9 }, t("brk", "打断", 50, { off: true }), t("merge", "合并", 51, { off: true }), t("split", "分割", 50, { off: true }), { sep: 9 },
  t("align", "对齐", 57, { caret: 3 }), t("offset", "偏移", 52, { off: true }), t("stretch", "拉伸", 50, { off: true }),
];
const row2a = [t("attr", "属性", 51), t("editbar", "编辑钢筋", 75), t("list", "构件列表", 76), t("dropper", "拾取构件", 70)];
const row2b = [t("twopts", "两点", 51), t("parallel", "平行", 50)];
const row3 = [
  t("cursor", "选择", 57), { sep: 13 }, t("pointx", "点", 38), t("rotpt", "旋转点", 58), { sep: 11 }, t("smart", "智能布置", 82, { caret: 3 }), { sep: 6 },
  t("mark", "原位标注", 76), t("coltab", "图元柱表", 75), t("adjust", "调整柱端头", 87), t("wallpos", "按墙位置绘制柱", 122, { caret: 7 }), t("corner", "自动判断边角柱", 104),
];
const snapA = [t("ortho", "正交", 49), t("snap", "对象捕捉", 75, { active: true }), t("dyn", "动态输入", 74, { active: true }), { sep: 14 }, t("cross", "交点", 49), t("perp", "垂点", 50, { active: true }), t("mid", "中点", 50, { active: true }), t("vertex", "顶点", 52, { active: true }), { sep: 4 }, t("coords", "坐标", 47)];

const SCENE_TEXT = { fontFamily: '"Liberation Sans", sans-serif', fill: "#e8e8e8" };

const Scene = () => (
  <Viewport viewBox="195 215 765 397" width="765" height="397">
    <g stroke="#c81818" strokeWidth="1" fill="none">
      <path d="M195 350L833 215" />
      <path d="M195 303L553 452" />
      <path d="M775 242L947 312" />
      <path d="M195 557L960 395" />
    </g>
    <g stroke="#1e7a1e" strokeWidth="1" fill="none">
      <path d="M244 612L960 460" />
      <path d="M549 612L960 525" />
      <path d="M622 480L897 595" />
      <path d="M708 503L698 523" />
    </g>
    <path d="M223 215h42v134l-42-19z" fill="#4a0a98" />
    <path d="M265 215h56v120l-56 14z" fill="#5a0ab2" />
    <path d="M702 215h42v32l-42-19z" fill="#4a0a98" />
    <path d="M744 215h55v20l-55 12z" fill="#5a0ab2" />
    <path d="M553 215h40v271l-41-18z" fill="#0a4f9e" />
    <path d="M593 215h57v258l-57 13z" fill="#0a5cb8" />
    <g fill="none" stroke="#146a14">
      <circle cx="209" cy="349" r="12" />
      <circle cx="209" cy="555" r="12" />
      <circle cx="947" cy="312" r="12" />
      <circle cx="909" cy="598" r="12" />
    </g>
    <g {...SCENE_TEXT} fontSize="16" textAnchor="middle">
      <text x="209" y="355">B</text>
      <text x="209" y="561">A</text>
      <text x="947" y="318">7</text>
      <text x="909" y="604">6</text>
      <text x="951" y="548">4</text>
      <text x="488" y="588" fontSize="17">5400</text>
    </g>
    <path d="M250 561V525" stroke="#0a78f0" strokeWidth="3" />
    <polygon points="250,515 246,527 254,527" fill="#0a78f0" />
    <text x="238" y="524" fontSize="13" fill="#0a78f0" fontFamily="Liberation Sans">Z</text>
    <path d="M250 561L228 552" stroke="#20e020" strokeWidth="3" />
    <path d="M250 561L283 553" stroke="#e81010" strokeWidth="3" />
    <polygon points="289,552 279,548 281,557" fill="#e81010" />
    <text x="270" y="552" fontSize="11" fill="#c02020" fontFamily="Liberation Sans">X</text>
    <text x="233" y="549" fontSize="10" fill="#20a020" fontFamily="Liberation Sans">Y</text>
  </Viewport>
);

const numbers = ["2.88", "78.951", "99.59", "42.125", "223.547"];

export default function App() {
  return (
    <Desktop>
      <Global />
      <AppWindow>
        <TitleBar>
          <Icon name="appMark" />
          <TitleText><Txt>{"广联达BIM钢筋算量软件 GGJ2013 - [D:\\预结算及抽筋\\广联达抽筋\\测试-2160.GGJ12]"}</Txt></TitleText>
          <WinBtn><svg width="11" height="11"><path d="M1 8.5h6" stroke="#fff" strokeWidth="3" /></svg></WinBtn>
          <WinBtn><svg width="13" height="13"><path d="M1.5 3.5h10v8h-10z" fill="none" stroke="#fff" /><path d="M1 2.5h11" stroke="#fff" strokeWidth="2" /></svg></WinBtn>
          <WinBtn $close><X size={15} color="#fff" strokeWidth={3} /></WinBtn>
        </TitleBar>
        <MenuBar>
          {["文件(F)", "编辑(E)", "楼层(L)", "构件(N)", "绘图(D)", "修改(M)", "钢筋量(Q)", "视图(V)", "工具(T)", "云应用(Y)", "BIM应用(I)", "在线服务(S)", "帮助(H)", "版本号(B)"].map((m) => (
            <span key={m}><Txt>{m}</Txt></span>
          ))}
          <MenuExtra><Icon name="docNew" />新建变更<Caret $m={6} /></MenuExtra>
        </MenuBar>
        <SmallRow><Icon name="face" />广小二</SmallRow>
        <AccountRow>
          <Patch />
          <AccountBand>
            <Txt>forpk.chen@163.com</Txt>
            <Caret $m={8} />
            <AccountText $m={8}><Txt>造价豆:0</Txt></AccountText>
            <AccountText $m={9}><Icon name="bell" /></AccountText>
            <AccountText $m={6}><Icon name="chat" /></AccountText>
            <AccountText $m={3}>我要建议</AccountText>
          </AccountBand>
        </AccountRow>
        <Strip $h={24} $mb={3}>
          <Band $w={153} $pl={7}>
            <Tools items={row0Left} />
            <More>»</More>
          </Band>
          <Band $w={547} $pl={4}>
            <Tools items={row0Mid} />
            <ToolBtn $w={90}><Icon name="batch" />批量选择</ToolBtn>
            <More>»</More>
          </Band>
          <Band $ml={4} $pl={4}>
            <ToolBtn $w={63}><Icon name="cube" />三维<Caret $m={7} /></ToolBtn>
            <ToolBtn $w={64}><Icon name="cubeTop" />俯视<Caret $m={8} /></ToolBtn>
            <ToolBtn $w={80}><Icon name="orbit" />动态观察</ToolBtn>
            <More>»</More>
          </Band>
        </Strip>
        <Main>
          <Sidebar>
            <SideHead>
              <SideTitle>模块导航栏</SideTitle>
              <SideHeadIcon><svg width="10" height="11"><path d="M3 1h4v5h2v1H6v4H4V7H1V6h2z" fill="#fff" /></svg></SideHeadIcon>
              <SideHeadIcon><X size={10} color="#fff" /></SideHeadIcon>
            </SideHead>
            <SideBtn $h={23}>工程设置</SideBtn>
            <SideBtn>绘图输入</SideBtn>
            <TreeTools>
              <svg width="15" height="15"><path d="M5 1h3v4h4v3H8v4H5V8H1V5h4z" fill="#1a6a3a" /><rect x="12" y="11" width="3" height="3" fill="#1a6a3a" /></svg>
              <svg width="15" height="15"><path d="M1 5h13v3H1z" fill="#1a6a3a" /></svg>
            </TreeTools>
            <TreeBox>
              {tree.map((node) => (
                <React.Fragment key={node.label}>
                  <TreeRow>
                    <Expander>{node.open ? "-" : "+"}</Expander>
                    <Icon name={node.open ? "folderOpen" : "folder"} />
                    <TreeLabel><Txt>{node.label}</Txt></TreeLabel>
                    {node.cad && <GridIcon><Icon name="cadgrid" /></GridIcon>}
                    {node.cad && <NewTag>NEW</NewTag>}
                  </TreeRow>
                  {node.kids && node.kids.map(([icon, label, sel], i) => (
                    <TreeRow $child key={label + i}>
                      <Branch $last={i === node.kids.length - 1} />
                      <Icon name={icon} size={15} />
                      <TreeLabel $child $sel={sel}><Txt>{label}</Txt></TreeLabel>
                    </TreeRow>
                  ))}
                </React.Fragment>
              ))}
            </TreeBox>
            <SideBtn $h={21}>单构件输入</SideBtn>
          </Sidebar>
          <Workspace>
            <Strip $h={24} $bg="#f0eee2">
              <Grip $w={11} />
              <Tools items={row1} />
              <More>»</More>
            </Strip>
            <Strip $h={26}>
              <Band $w={567}>
                <Grip $w={10} />
                <SelectBox $w={58} $mr={1}>基础层<Caret $m={0} /></SelectBox>
                <SelectBox $w={69}>柱<Caret $m={0} /></SelectBox>
                <SelectBox $w={69}>框柱<Caret $m={0} /></SelectBox>
                <SelectBox $w={70} $mr={0}><Txt>KZ-1</Txt><Caret $m={0} /></SelectBox>
                <SepLine $w={11} />
                <Tools items={row2a} />
              </Band>
              <Band $w={160} $ml={3}>
                <Grip $w={10} $x={2} />
                <Tools items={row2b} />
                <More $r={6}>»</More>
              </Band>
              <Grip $w={14} $x={5} />
            </Strip>
            <Strip $h={28} $bg="#f0eee2">
              <Grip $w={12} />
              <Tools items={row3} />
              <More>»</More>
            </Strip>
            <Scene />
            <Strip $h={26} $bg="#f0eee2">
              <Grip $w={10} />
              <Tools items={snapA} />
              <Grip $w={12} $x={3} />
              <SelectBox $w={56} $mr={2}>不偏移<Caret $m={0} /></SelectBox>
              <SepLine $w={5} />
              <FieldLabel><Txt>X=</Txt></FieldLabel>
              <NumInput $w={56}><Txt>0</Txt></NumInput>
              <FieldLabel><Txt>mm</Txt></FieldLabel>
              <FieldLabel><Txt>Y=</Txt></FieldLabel>
              <NumInput $w={58}><Txt>0</Txt></NumInput>
              <FieldLabel><Txt>mm</Txt></FieldLabel>
              <More>»</More>
            </Strip>
            <StatusLine>
              <CloseDot />
              <span><Txt>钢筋总重量( Kg ) : 223.547</Txt></span>
            </StatusLine>
            <TableArea>
              <TableGutter />
              <TablePane>
                <Sheet>
                  <colgroup>
                    <col width="22" /><col width="65" /><col width="101" /><col width="73" /><col width="73" /><col width="73" /><col width="73" /><col width="73" />
                  </colgroup>
                  <tbody>
                    <tr>
                      <Cell rowSpan={2} $bg="#f2f1e8" />
                      <Cell rowSpan={2} $center $color="#8a1a30" $bg="linear-gradient(#f8e4b8,#f3b868)">构件名称</Cell>
                      <Cell rowSpan={2} $bg="#f2f1e8"><Txt>钢筋总重量( Kg )</Txt></Cell>
                      <Cell colSpan={5} $center $bg="#f2f1e8"><Txt>HRB400</Txt></Cell>
                    </tr>
                    <tr>
                      {["8", "10", "20", "22", "合计"].map((h) => (
                        <Cell key={h} $center $bg="#f2f1e8"><Txt>{h}</Txt></Cell>
                      ))}
                    </tr>
                    <tr>
                      <Cell $center $color="#8a3a10" $bg="#fcdcae"><Txt>1</Txt></Cell>
                      <Cell $bg="#e8eefa"><Txt>KZ-2[412]</Txt></Cell>
                      <Cell><Txt>223.547</Txt></Cell>
                      {numbers.map((n) => <Cell key={n}><Txt>{n}</Txt></Cell>)}
                    </tr>
                    <tr>
                      <Cell $center $bg="#f2f1e8"><Txt>2</Txt></Cell>
                      <Cell $bg="#c8f8d0">合计</Cell>
                      <Cell $bg="#c8f8d0"><Txt>223.547</Txt></Cell>
                      {numbers.map((n) => <Cell key={n} $bg="#c8f8d0"><Txt>{n}</Txt></Cell>)}
                    </tr>
                  </tbody>
                </Sheet>
              </TablePane>
            </TableArea>
          </Workspace>
        </Main>
      </AppWindow>

      <Browser>
        <BRow $h={33}>
          <BTitle><Txt>全浏览器 9.1</Txt></BTitle>
          <RightGroup>
            <ChevronRight size={14} color="#888" />
            <BMenu $m={8}>文件</BMenu>
            <BMenu>查看</BMenu>
            <BMenu>收藏</BMenu>
            <BMenu>工具</BMenu>
            <BMenu>帮助</BMenu>
            <EdgeBox />
          </RightGroup>
        </BRow>
        <BRow $h={27} $bg="#f2f2f2" $line>
          <NavSlot $w={33} $edge><RotateCw size={15} strokeWidth={2.4} /></NavSlot>
          <NavSlot $w={31}><House size={16} color="#333" strokeWidth={2.2} /></NavSlot>
          <UrlField>
            <Icon name="globe" />
            <UrlTail>http://e.<UrlDark>fwxgx.com</UrlDark>/question_18508</UrlTail>
            <Icon name="leaf" />
            <Zap size={15} color="#3cc04a" fill="#3cc04a" />
            <NavSlot $w={7} />
          </UrlField>
          <NavSlot $w={25}><ChevronDown size={15} color="#444" strokeWidth={2.6} /></NavSlot>
          <SearchField>点此搜索</SearchField>
        </BRow>
        <BRow $h={38}>
          <Mark $w={51}>址大全</Mark>
          <Mark $w={79} $gap={3}><File size={13} color="#999" />交通违法</Mark>
          <Mark $w={82} $m={1} $gap={1}><Icon name="house2345" /><Txt>软件-2345</Txt></Mark>
          <Mark $w={81}><Icon name="sun" />佛山天气</Mark>
          <Mark $w={71} $gap={3}><FaPaw size={14} color="#3a6ae0" />百度文库</Mark>
          <ChevronsRight size={14} color="#888" />
          <Mark $w={10} $m={59}><Grip $w={3} $x={0} /></Mark>
          <Mark $w={40}><Icon name="gridApps" /><Caret $m={10} /></Mark>
          <Mark $w={22}><Icon name="book" /></Mark>
          <Mark $w={16}><Icon name="redbox" /></Mark>
        </BRow>
        <BRow $h={28}>
          <Tab $w={136} $mr={3} $pl={4}>
            <TabLabel $fade>航_新一代安全上网导</TabLabel>
            <TabClose><X size={12} /></TabClose>
          </Tab>
          <Tab $w={192} $mr={2}>
            <Icon name="logoTab" />
            <TabLabel $fade>答疑解惑_广联达服务新干线</TabLabel>
            <TabClose><X size={12} /></TabClose>
          </Tab>
          <Tab $w={190} $on>
            <Icon name="logoTab" />
            <TabLabel>钢筋_广联达服务新干线</TabLabel>
            <TabClose $r={6}><ChevronRight size={12} /></TabClose>
          </Tab>
        </BRow>
        <BRow $h={40} $bg="#f5f5f5" $line>
          <Divider />
          <NavLink><Txt>服务新干线首页</Txt></NavLink>
          <Divider />
          <NavLink>广材网</NavLink>
        </BRow>
        <LogoArea>
          <Bird width="32" height="72" viewBox="0 0 32 72">
            <path d="M0 16l4 8 24-2q4 6-2 12l-12 6-14-4z" fill="#f8d448" stroke="#c89a20" />
            <path d="M0 30q12 12 14 34Q8 72 0 74z" fill="#2a90d8" />
          </Bird>
          <LogoBlock>
            <LogoMain>答疑解惑</LogoMain>
            <LogoSub>广联达服务新干线</LogoSub>
          </LogoBlock>
          <SearchCol>
            <SearchBox>请输入搜索</SearchBox>
            <SearchHint>广东常见问题</SearchHint>
          </SearchCol>
        </LogoArea>
        <Crumb>{"S \\我来搜 \\问题详情"}</Crumb>
        <Gap $h={50} />
        <QHead>钢筋</QHead>
        <Stats>{"览5 次 | 0 回答 | 0 答得好 | 0问得好"}</Stats>
        <QBody>对柱的钢筋汇总计算的时候，基础层的钢筋为什么会计算到首层的钢筋量</QBody>
        <Actions>
          <Action $w={109} $color="#dc5a6e">
            <Disc $bg="#fdd7de"><ThumbsUp size={19} strokeWidth={1.4} /><DiscNum>0</DiscNum></Disc>
            <ActionLabel>问得好</ActionLabel>
          </Action>
          <Action $w={110} $color="#d4a24a">
            <Disc $bg="#ffecc8"><Star size={19} strokeWidth={1.4} /><DiscNum>0</DiscNum></Disc>
            <ActionLabel>我收藏</ActionLabel>
          </Action>
          <Action $w={110} $color="#4f9cd8">
            <Disc $bg="#d0ecfd"><FaRegShareSquare size={18} /><DiscNum>0</DiscNum></Disc>
            <ActionLabel>我分享</ActionLabel>
          </Action>
        </Actions>
        <Rule />
        <Gap $h={60} />
        <Rule />
        <Notice>以下交流中文明用语，共创和谐交流圈！</Notice>
      </Browser>

      <Marks width="1474" height="817" viewBox="0 0 1474 817">
        <Arrow from={[574, 371]} to={[229, 185]} />
        <Arrow from={[222, 186]} to={[114, 374]} />
        <Arrow from={[115, 378]} to={[339, 666]} />
        <Arrow from={[1113, 546]} to={[537, 130]} />
        <Arrow from={[538, 130]} to={[581, 312]} w={2.5} half={5} />
        <Arrow from={[1035, 546]} to={[1346, 546]} half={6} head={17} />
        <ellipse cx="503" cy="688" rx="343" ry="118" transform="rotate(2.5 503 688)" fill="none" stroke={RED} strokeWidth="3.5" />
      </Marks>
    </Desktop>
  );
}
